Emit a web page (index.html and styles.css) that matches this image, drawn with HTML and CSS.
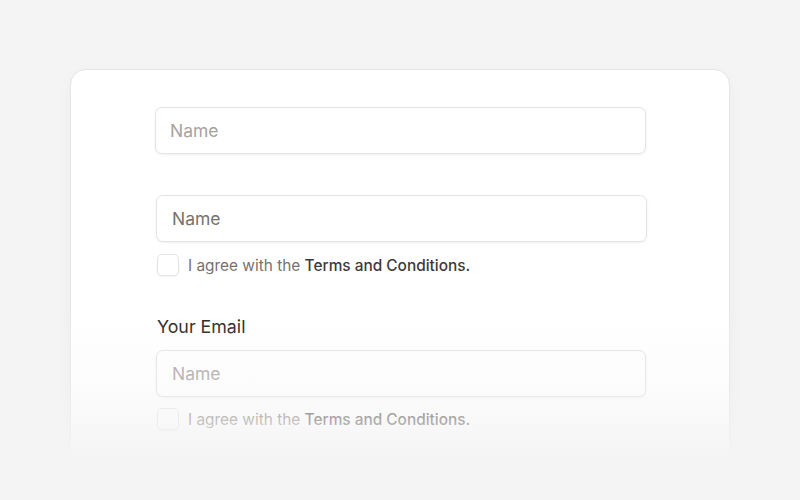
FILE: index.html
```html
<!DOCTYPE html>
<html lang="en">
<head>
<meta charset="utf-8">
<title>Form</title>
<link rel="stylesheet" href="styles.css">
</head>
<body>
<main class="stage">
  <section class="card">
    <div class="form">
      <div class="field">
        <input class="input" type="text" placeholder="Name">
      </div>
      <div class="field">
        <input class="input filled" type="text" value="Name">
        <label class="check">
          <span class="box"></span>
          <span class="check-text">I agree with the <strong>Terms and Conditions.</strong></span>
        </label>
      </div>
      <div class="field email">
        <div class="label">Your Email</div>
        <input class="input" type="text" placeholder="Name">
        <label class="check">
          <span class="box"></span>
          <span class="check-text">I agree with the <strong>Terms and Conditions.</strong></span>
        </label>
      </div>
    </div>
  </section>
  <div class="fade"></div>
</main>
</body>
</html>
```
FILE: styles.css
```css
* { box-sizing: border-box; }
html, body { margin: 0; height: 100%; }
body {
  background: #f4f4f4;
  font-family: Inter, "Noto Sans", sans-serif;
  overflow: hidden;
}
.stage {
  position: relative;
  height: 500px;
  overflow: hidden;
  padding: 69px 70px 0;
}
.card {
  background: #fff;
  border: 1px solid #e6e6e6;
  border-radius: 16px;
  box-shadow: 0 4px 14px rgba(0,0,0,0.04);
  height: 440px;
  padding: 37px 83px 0 84px;
}
.form {
  display: flex;
  flex-direction: column;
  gap: 41px;
}
.field {
  display: flex;
  flex-direction: column;
  gap: 12px;
}
.field.email { margin-top: -2px; gap: 11px; }
.input {
  display: block;
  width: 100%;
  height: 47px;
  border: 1px solid #e4e4e4;
  border-radius: 7px;
  box-shadow: 0 1px 3px rgba(0,0,0,0.06);
  background: #fff;
  padding: 0 14px;
  font-family: inherit;
  font-size: 17.5px;
  color: #78716c;
  outline: none;
}
.input.filled, .email .input { padding-left: 15px; margin-left: 1px; }
.email .input { width: calc(100% - 1px); }
.input::placeholder { color: #a8a29e; }
.check {
  display: flex;
  align-items: center;
  gap: 9px;
  margin-left: 2px;
}
.box {
  width: 22px;
  height: 22px;
  border: 1px solid #e4e4e4;
  border-radius: 5px;
  box-shadow: 0 1px 2px rgba(0,0,0,0.05);
  background: #fff;
  flex: none;
}
.check-text {
  font-size: 15.4px;
  color: #78716c;
}
.check-text strong {
  font-weight: 500;
  color: #3f3a37;
}
.label {
  font-size: 17.8px;
  line-height: 24px;
  color: #292524;
  margin-left: 2px;
}
.fade {
  position: absolute;
  left: 0;
  right: 0;
  top: 310px;
  bottom: 0;
  background: linear-gradient(to bottom, rgba(244,244,244,0) 0px, rgba(244,244,244,0.3) 80px, rgba(244,244,244,0.75) 125px, rgba(244,244,244,1) 155px);
  pointer-events: none;
}
```
